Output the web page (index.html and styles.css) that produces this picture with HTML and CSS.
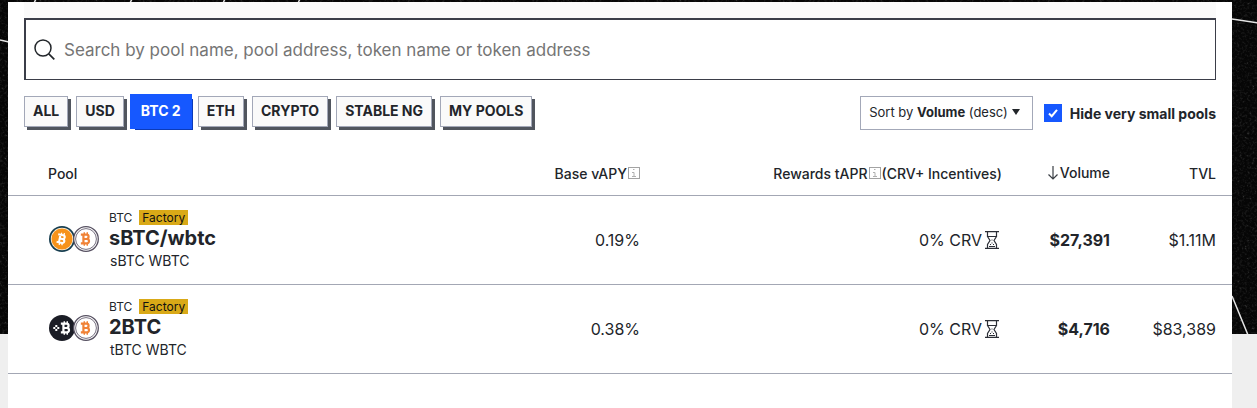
FILE: index.html
```
<!DOCTYPE html>
<html lang="en">
<head>
<meta charset="utf-8">
<meta name="viewport" content="width=device-width, initial-scale=1">
<title>Pools</title>
<link rel="stylesheet" href="styles.css">
</head>
<body>
<svg class="backdrop" aria-hidden="true">
  <filter id="grain" x="0" y="0" width="100%" height="100%" color-interpolation-filters="sRGB">
    <feTurbulence type="fractalNoise" baseFrequency="0.4" numOctaves="3" seed="7"/>
    <feColorMatrix values="0.8 0 0 0 -0.2  0.8 0 0 0 -0.2  0.8 0 0 0 -0.2  0 0 0 0 1"/>
    <feComponentTransfer>
      <feFuncR type="table" tableValues="0.02 0.03 0.1 0.3 0.6 0.8"/>
      <feFuncG type="table" tableValues="0.02 0.03 0.1 0.3 0.6 0.8"/>
      <feFuncB type="table" tableValues="0.02 0.03 0.1 0.3 0.6 0.8"/>
    </feComponentTransfer>
  </filter>
  <rect width="100%" height="100%" fill="#080808"/>
  <rect width="100%" height="100%" filter="url(#grain)"/>
  <g stroke="#e4e4e4" stroke-width="1.5">
    <path d="M0 40l9 2M34 3l2-4M130 3l2-4M223 3l2-4M298 3l2-4"/>
  </g>
  <svg x="100%" overflow="visible">
    <path d="M-25 19l26 4M-25 296l16 39" stroke="#e4e4e4" stroke-width="1.5"/>
  </svg>
</svg>
<svg class="defs" aria-hidden="true">
  <symbol id="bitcoin" viewBox="0 0 14 16">
    <path fill="none" stroke="currentColor" stroke-width="2.600" d="M1 3h6.500a2.400 2.400 0 0 1 0 5H4M1 13h7a2.500 2.500 0 0 0 0-5M4 3v10"/>
    <path fill="none" stroke="currentColor" stroke-width="1.700" d="M5 0v3M8.500 0v3M5 13v3M8.500 13v3"/>
  </symbol>
  <symbol id="sbtc" viewBox="0 0 26 26">
    <circle cx="13" cy="13" r="13" fill="#173e50"/>
    <circle cx="13" cy="13" r="11.200" fill="#fff3df"/>
    <circle cx="13" cy="13" r="10.500" fill="#f7931a"/>
    <g color="#fff" transform="rotate(12 13 13)"><use href="#bitcoin" x="7.500" y="6.500" width="11" height="13"/></g>
  </symbol>
  <symbol id="wbtc" viewBox="0 0 26 26">
    <circle cx="13" cy="13" r="12.300" fill="#fff" stroke="#565061" stroke-width="1.300"/>
    <circle cx="13" cy="13" r="10.400" fill="#fff" stroke="#777181" stroke-width="1"/>
    <g color="#f08236"><use href="#bitcoin" x="7" y="6" width="12" height="14"/></g>
  </symbol>
  <symbol id="tbtc" viewBox="0 0 26 26">
    <circle cx="13" cy="13" r="13" fill="#1b1d26"/>
    <path fill="#fff" d="M6.300 9.900h2v2h-2zM6.300 13.900h2v2h-2zM4.300 11.900h2v2h-2zM8.300 11.900h2v2h-2z"/>
    <g color="#fff"><use href="#bitcoin" x="11" y="6" width="12" height="14"/></g>
  </symbol>
  <symbol id="info" viewBox="0 0 12 12">
    <rect x=".5" y=".5" width="11" height="11" fill="none" stroke="#a3a3a3"/>
    <path d="M5 2.500h1.500M4 5.500h2v4M4 9.500h4" fill="none" stroke="#b0b0b0"/>
  </symbol>
  <symbol id="hourglass" viewBox="0 0 14 18">
    <path d="M0 .7h14M0 17.300h14M2.500 1v4.500h9V1M2.500 17v-3.500L5 9.500 2.500 5.500M11.500 17v-3.500L9 9.500l2.500-4M4 15.500h6" fill="none" stroke="#2b2e36" stroke-width="1.200"/>
    <path d="M6.500 8.500h1v1h-1zM6.500 11.500h1v1h-1zM5 13h1v1H5zM8 13h1v1H8z" fill="#2b2e36"/>
  </symbol>
</svg>

<main class="panel">
  <div class="tools">
    <label class="search">
      <svg class="search-icon" viewBox="0 0 22 22" aria-hidden="true"><path d="M14.800 14.800l5.500 5.500" stroke="#22262a" stroke-width="1.700"/><circle cx="9" cy="9" r="8" fill="none" stroke="#22262a" stroke-width="1.500"/></svg>
      <input class="search-input" type="search" aria-label="Search pools" placeholder="Search by pool name, pool address, token name or token address">
    </label>
    <div class="toolbar">
      <div class="filters">
        <button class="chip">ALL</button>
        <button class="chip">USD</button>
        <button class="chip active" aria-pressed="true">BTC 2</button>
        <button class="chip">ETH</button>
        <button class="chip">CRYPTO</button>
        <button class="chip">STABLE NG</button>
        <button class="chip">MY POOLS</button>
      </div>
      <div class="options">
        <button class="sort" aria-haspopup="listbox"><span>Sort by <b>Volume</b> (desc)</span><svg class="caret" viewBox="0 0 8 6" aria-hidden="true"><path d="M0 0h8L4 6z" fill="#22262a"/></svg></button>
        <div class="toggle">
          <span class="box">
            <input class="check" type="checkbox" id="hide-small" checked>
            <svg class="tick" viewBox="0 0 18 18" aria-hidden="true"><path d="M5 9.500l2.700 2.700L13 5.800" fill="none" stroke="#fff" stroke-width="2"/></svg>
          </span>
          <label for="hide-small">Hide very small pools</label>
        </div>
      </div>
    </div>
  </div>

  <table class="pools">
    <colgroup><col><col class="col-base"><col class="col-rewards"><col class="col-volume"><col class="col-tvl"></colgroup>
    <thead>
      <tr>
        <th class="pool-cell" scope="col">Pool</th>
        <th scope="col"><span class="head">Base vAPY<svg class="info"><use href="#info"/></svg></span></th>
        <th scope="col"><span class="head">Rewards tAPR<svg class="info"><use href="#info"/></svg>(CRV+ Incentives)</span></th>
        <th scope="col" aria-sort="descending"><span class="head"><svg class="arrow" viewBox="0 0 10 14" aria-hidden="true"><path d="M5 0v13M.5 8.500L5 13l4.500-4.500" fill="none" stroke="#3b3f45" stroke-width="1.200"/></svg>Volume</span></th>
        <th class="last" scope="col">TVL</th>
      </tr>
    </thead>
    <tbody>
      <tr>
        <td class="pool-cell">
          <div class="pool">
            <div class="coins"><svg class="coin"><use href="#sbtc"/></svg><svg class="coin"><use href="#wbtc"/></svg></div>
            <div class="about">
              <div class="tags"><span>BTC</span><span class="factory">Factory</span></div>
              <div class="name">sBTC/wbtc</div>
              <div class="tokens">sBTC WBTC</div>
            </div>
          </div>
        </td>
        <td>0.19%</td>
        <td><span class="reward">0% CRV<svg class="hourglass"><use href="#hourglass"/></svg></span></td>
        <td class="strong">$27,391</td>
        <td class="last">$1.11M</td>
      </tr>
      <tr>
        <td class="pool-cell">
          <div class="pool">
            <div class="coins"><svg class="coin"><use href="#tbtc"/></svg><svg class="coin"><use href="#wbtc"/></svg></div>
            <div class="about">
              <div class="tags"><span>BTC</span><span class="factory">Factory</span></div>
              <div class="name">2BTC</div>
              <div class="tokens">tBTC WBTC</div>
            </div>
          </div>
        </td>
        <td>0.38%</td>
        <td><span class="reward">0% CRV<svg class="hourglass"><use href="#hourglass"/></svg></span></td>
        <td class="strong">$4,716</td>
        <td class="last">$83,389</td>
      </tr>
    </tbody>
  </table>
</main>
</body>
</html>
```
FILE: styles.css
```
* { box-sizing: border-box; }
body {
  margin: 0;
  padding: 2px 25px 0 8px;
  min-height: 100vh;
  display: flex;
  background: #efefef;
  color: #22252a;
  font-family: Inter, "Liberation Sans", sans-serif;
  font-size: 16px;
}
button, input { font: inherit; color: inherit; }
.backdrop { position: absolute; z-index: -1; top: 0; left: 0; width: 100%; height: 334px; }
.defs { position: absolute; width: 0; height: 0; }
.panel { flex: 1; min-width: 0; background: #fff; }
.tools { padding: 0 16px; }
.search {
  display: flex;
  align-items: center;
  gap: 8px;
  height: 62px;
  padding: 0 8px;
  border: 1px solid #3b3e49;
  border-width: 2px 1px 1px 2px;
}
.tools::before { content: ""; display: block; height: 16px; background: #fafafa; }
.search-icon { width: 22px; height: 22px; }
.search-input { flex: 1; min-width: 0; padding: 0; border: 0; outline: 0; background: none; font-size: 17px; }
.search-input::placeholder { color: #757575; opacity: 1; }
.toolbar { display: flex; justify-content: space-between; align-items: flex-start; padding-top: 16px; }
.filters { display: flex; flex-wrap: wrap; gap: 8px; }
.chip {
  height: 31px;
  padding: 0 8px 2px;
  border: 1px solid #a3a8b8;
  background: #fafafa;
  box-shadow: 3px 3px #50555e;
  font-size: 14px;
  font-weight: 700;
}
.chip.active {
  border-color: #1658ff;
  background: #1658ff;
  color: #fff;
  box-shadow: 0 0 0 2px #1658ff, 3px 3px #0c3bb8;
}
.options { display: flex; gap: 11px; }
.sort {
  display: flex;
  align-items: center;
  gap: 4px;
  height: 34px;
  padding: 0 12px 2px 8px;
  border: 1px solid #a3a8b8;
  background: #fff;
  font-size: 13px;
}
.caret { width: 8px; height: 6px; }
.toggle { display: flex; align-items: center; gap: 8px; height: 34px; font-size: 14px; font-weight: 700; }
.box { display: grid; width: 18px; height: 18px; }
.check, .tick { grid-area: 1 / 1; width: 18px; height: 18px; }
.check { appearance: none; margin: 0; background: #1658ff; }
.tick { z-index: 1; pointer-events: none; }
.pools { width: 100%; margin-top: 22px; border-collapse: collapse; table-layout: fixed; }
.col-base { width: 180px; }
.col-rewards { width: 362px; }
.col-volume { width: 108px; }
.col-tvl { width: 122px; }
th, td { padding: 0; text-align: right; border-bottom: 1px solid #a3a7b4; }
th { height: 43px; font-size: 14px; font-weight: 500; }
td { height: 89px; }
th.last, td.last { padding-right: 16px; }
th.pool-cell, td.pool-cell { padding-left: 40px; text-align: left; }
.head { display: inline-flex; align-items: center; gap: 1px; }
.info { width: 12px; height: 12px; }
.arrow { width: 12px; height: 14px; }
.strong { font-weight: 700; }
.reward { display: inline-flex; align-items: center; gap: 3px; padding-right: 3px; }
.hourglass { width: 14px; height: 18px; }
.pool { display: flex; align-items: center; gap: 10px; padding-left: 1px; }
.coins { display: flex; padding-bottom: 2px; }
.coin { width: 26px; height: 26px; }
.coin + .coin { margin-left: -2px; }
.about { padding-top: 1px; }
.tags { display: flex; gap: 7px; font-size: 12px; line-height: 15px; }
.factory { padding: 0 3px; background: #d9a917; color: #111; }
.name { font-size: 20px; font-weight: 700; line-height: 26px; }
.tokens { padding-left: 1px; font-size: 14px; line-height: 20px; }
```
